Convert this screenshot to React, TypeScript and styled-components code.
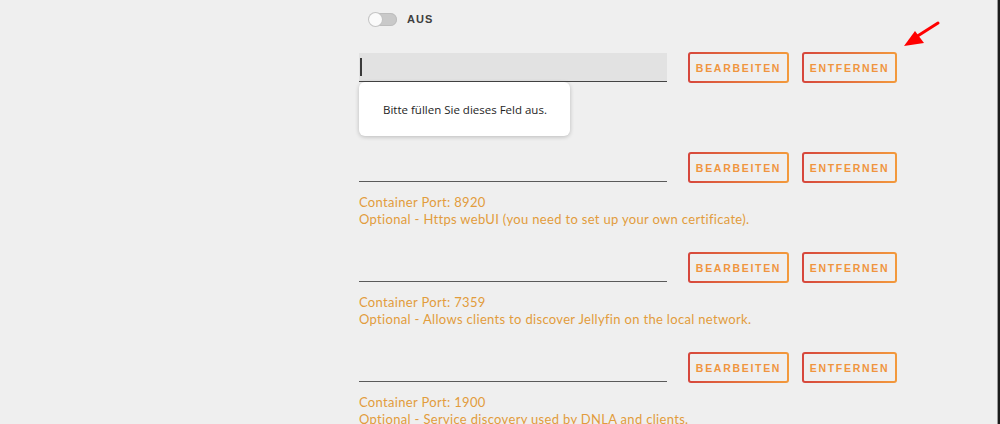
import React from "react";
import styled, { createGlobalStyle } from "styled-components";

const GlobalStyle = createGlobalStyle`
  html, body {
    margin: 0;
    padding: 0;
    background: #efefef;
  }
`;

// fenster mit dunklem rand rechts
const Page = styled.div`
  position: relative;
  width: 1000px;
  height: 424px;
  box-sizing: border-box;
  overflow: hidden;
  background: #efefef;
  border-right: 2px solid #1b1b1b;
  box-shadow: inset -1px 0 0 #9a9a9a;
  font-family: "Lato", "Liberation Sans", sans-serif;
`;

const Column = styled.div`
  display: flex;
  flex-direction: column;
  padding-left: 359px;
  padding-top: 11px;
`;

// schalter oben
const ToggleRow = styled.div`
  display: flex;
  align-items: center;
  gap: 10px;
  padding-left: 10px;
  height: 16px;
  margin-bottom: 25px;
`;

const Track = styled.div<{ on?: boolean }>`
  position: relative;
  width: 28px;
  height: 13px;
  border-radius: 7px;
  background: ${(p) => (p.on ? "#f0953e" : "#c9c9c9")};
  box-shadow: inset 0 0 0 1px #bdbdbd;
`;

const Knob = styled.div`
  position: absolute;
  top: 0;
  left: 0;
  width: 13px;
  height: 13px;
  border-radius: 50%;
  background: #fafafa;
  box-shadow: 0 0 0 1px #c4c4c4;
`;

const ToggleLabel = styled.span`
  font-family: "Liberation Sans", Arial, sans-serif;
  font-weight: 700;
  font-size: 11px;
  letter-spacing: 1px;
  color: #3e3e3e;
`;

// ein port-eintrag
const Entry = styled.div`
  height: 100px;
`;

const Row = styled.div`
  display: flex;
  align-items: flex-start;
`;

const FieldWrap = styled.div`
  position: relative;
  width: 308px;
  margin-top: 1px;
  margin-right: 21px;
`;

const Field = styled.input<{ focused?: boolean }>`
  display: block;
  width: 100%;
  height: 29px;
  box-sizing: border-box;
  border: none;
  border-bottom: 1px solid ${(p) => (p.focused ? "#444" : "#5a5a5a")};
  background: ${(p) => (p.focused ? "#e2e2e2" : "transparent")};
  outline: none;
  padding: 0 2px;
  font-size: 13px;
`;

const Caret = styled.span`
  position: absolute;
  left: 1px;
  top: 5px;
  width: 2px;
  height: 18px;
  background: #3a3a3a;
`;

const Tooltip = styled.div`
  position: absolute;
  top: 29px;
  left: 0;
  width: 211px;
  height: 54px;
  box-sizing: border-box;
  padding-left: 24px;
  display: flex;
  align-items: center;
  background: #fff;
  border-radius: 6px;
  box-shadow: 0 1px 4px rgba(0, 0, 0, 0.22);
  font-family: "Open Sans", "Noto Sans", sans-serif;
  font-size: 11.5px;
  color: #1e1e1e;
  z-index: 2;
`;

const Buttons = styled.div`
  display: flex;
  gap: 13px;
`;

const ActionButton = styled.button<{ w: number }>`
  width: ${(p) => p.w}px;
  height: 31px;
  padding: 0;
  border: 2px solid transparent;
  border-radius: 3px;
  background: linear-gradient(#efefef, #efefef) padding-box,
    linear-gradient(to right, #d6463c, #f39a3c) border-box;
  font-family: "Liberation Sans", Arial, sans-serif;
  font-weight: 700;
  font-size: 10.5px;
  letter-spacing: 1.7px;
  color: #f0953e;
  cursor: pointer;
`;

const Desc = styled.div`
  margin-top: 11px;
  font-size: 13px;
  letter-spacing: 0.32px;
  line-height: 17px;
  color: #e29c3c;
`;

const Pointer = styled.svg`
  position: absolute;
  left: 900px;
  top: 18px;
`;

const entries = [
  { port: "", note: "" },
  { port: "8920", note: "Optional - Https webUI (you need to set up your own certificate)." },
  { port: "7359", note: "Optional - Allows clients to discover Jellyfin on the local network." },
  { port: "1900", note: "Optional - Service discovery used by DNLA and clients." },
];

export default function App() {
  return (
    <>
      <GlobalStyle />
      <Page>
        <Column>
          <ToggleRow>
            <Track>
              <Knob />
            </Track>
            <ToggleLabel>AUS</ToggleLabel>
          </ToggleRow>

          {entries.map((e, i) => (
            <Entry key={i}>
              <Row>
                <FieldWrap>
                  <Field focused={i === 0} readOnly />
                  {i === 0 && <Caret />}
                  {i === 0 && <Tooltip>Bitte füllen Sie dieses Feld aus.</Tooltip>}
                </FieldWrap>
                <Buttons>
                  <ActionButton w={101}>BEARBEITEN</ActionButton>
                  <ActionButton w={95}>ENTFERNEN</ActionButton>
                </Buttons>
              </Row>
              {e.port && (
                <Desc>
                  Container Port: {e.port}
                  <br />
                  {e.note}
                </Desc>
              )}
            </Entry>
          ))}
        </Column>

        <Pointer width="44" height="34" viewBox="0 0 44 34">
          <line x1="38" y1="5" x2="16" y2="19" stroke="#ff0000" strokeWidth="3" strokeLinecap="round" />
          <polygon points="4,28 15,13 24,25" fill="#ff0000" />
        </Pointer>
      </Page>
    </>
  );
}
